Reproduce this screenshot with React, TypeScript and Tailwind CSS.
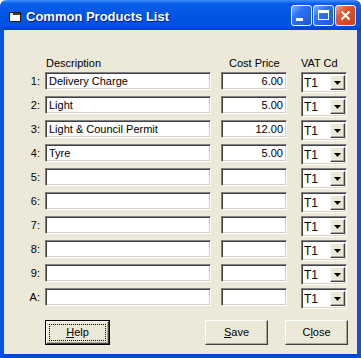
const rows = [
  { n: "1:", desc: "Delivery Charge", price: "6.00" },
  { n: "2:", desc: "Light", price: "5.00" },
  { n: "3:", desc: "Light & Council Permit", price: "12.00" },
  { n: "4:", desc: "Tyre", price: "5.00" },
  { n: "5:", desc: "", price: "" },
  { n: "6:", desc: "", price: "" },
  { n: "7:", desc: "", price: "" },
  { n: "8:", desc: "", price: "" },
  { n: "9:", desc: "", price: "" },
  { n: "A:", desc: "", price: "" },
];

const sunken =
  "border border-t-[#808080] border-l-[#808080] border-b-white border-r-white shadow-[inset_1px_1px_0_#404040,inset_-1px_-1px_0_#d4d0c8] bg-white";

const raised =
  "border border-t-white border-l-white border-b-[#404040] border-r-[#404040] shadow-[inset_-1px_-1px_0_#aca899] bg-[#ece9d8]";

function TitleButton({ kind }: { kind: "min" | "max" | "close" }) {
  const bg =
    kind === "close"
      ? "bg-[linear-gradient(135deg,#f0a08a_0%,#e0582f_35%,#c9401c_100%)]"
      : "bg-[linear-gradient(135deg,#7fb0ff_0%,#2f74f5_35%,#1a55e0_100%)]";
  return (
    <div
      className={`w-[21px] h-[21px] rounded-[3px] border border-white flex items-center justify-center ${bg}`}
    >
      {kind === "min" && <div className="w-[7px] h-[3px] bg-white mt-[9px] -ml-[5px]" />}
      {kind === "max" && (
        <div className="w-[11px] h-[10px] border border-white border-t-[3px]" />
      )}
      {kind === "close" && (
        <svg width="11" height="11" viewBox="0 0 11 11">
          <path d="M1.5 1.5 L9.5 9.5 M9.5 1.5 L1.5 9.5" stroke="white" strokeWidth="2" />
        </svg>
      )}
    </div>
  );
}

function Combo() {
  return (
    <div className={`${sunken} w-[46px] h-[21px] flex items-center pl-[2px] pr-[1px]`}>
      <span className="flex-1 leading-none text-[12px]">T1</span>
      <div className={`${raised} w-[15px] h-[15px] flex items-center justify-center`}>
        <svg width="7" height="4" viewBox="0 0 7 4">
          <path d="M0 0 H7 L3.5 4 Z" fill="black" />
        </svg>
      </div>
    </div>
  );
}

export default function App() {
  return (
    <div
      className="w-[361px] h-[358px] flex flex-col text-[11px] text-black select-none"
      style={{ fontFamily: '"Liberation Sans", Arial, sans-serif' }}
    >
      {/* title bar */}
      <div className="h-[30px] shrink-0 rounded-t-[6px] bg-[linear-gradient(to_bottom,#3c8ff9_0%,#0a5fe9_12%,#0055e5_50%,#0052e0_85%,#0040d0_100%)] flex items-center pl-[9px] pr-[5px]">
        <svg width="12" height="10" viewBox="0 0 12 10" className="mt-[3px]">
          <rect x="0.5" y="0.5" width="11" height="9" fill="white" stroke="#1a1a1a" />
          <rect x="1" y="1" width="10" height="2" fill="#3a3a3a" />
          <rect x="1" y="1" width="3" height="2" fill="#dcdcdc" />
        </svg>
        <span className="ml-[5px] mt-[3px] text-white font-bold text-[13px] [text-shadow:1px_1px_#0a1883]">
          Common Products List
        </span>
        <div className="ml-auto flex gap-[1px]">
          <TitleButton kind="min" />
          <TitleButton kind="max" />
          <TitleButton kind="close" />
        </div>
      </div>

      {/* body */}
      <div className="flex-1 bg-[#ece9d8] border-x-4 border-b-4 border-x-[#0055e5] border-b-[#0049d8] pt-[25px]">
        <div className="flex h-[14px] items-end leading-none">
          <div className="w-[41px]" />
          <div className="w-[166px] pl-[1px]">Description</div>
          <div className="w-[66px] ml-[10px] pl-[8px]">Cost Price</div>
          <div className="ml-[14px]">VAT Cd</div>
        </div>

        <div className="mt-[3px] flex flex-col">
          {rows.map((r) => (
            <div key={r.n} className="flex h-[24px] items-start">
              <div className="w-[41px] h-[18px] flex items-center justify-end pr-[5px]">
                {r.n}
              </div>
              <div className={`${sunken} w-[166px] h-[18px] flex items-center px-[3px]`}>
                {r.desc}
              </div>
              <div
                className={`${sunken} w-[66px] h-[18px] ml-[10px] flex items-center justify-end px-[3px]`}
              >
                {r.price}
              </div>
              <div className="ml-[14px]">
                <Combo />
              </div>
            </div>
          ))}
        </div>

        <div className="mt-[8px] flex">
          <div className="ml-[41px] w-[65px] h-[25px] border border-black">
            <div className={`${raised} w-full h-full flex items-center justify-center p-[2px]`}>
              <div className="w-full h-full border border-dotted border-black flex items-center justify-center">
                <span>
                  <span className="underline">H</span>elp
                </span>
              </div>
            </div>
          </div>
          <div
            className={`${raised} ml-[95px] w-[63px] h-[25px] flex items-center justify-center`}
          >
            <span>
              <span className="underline">S</span>ave
            </span>
          </div>
          <div
            className={`${raised} ml-[17px] w-[63px] h-[25px] flex items-center justify-center`}
          >
            <span>
              C<span className="underline">l</span>ose
            </span>
          </div>
        </div>
      </div>
    </div>
  );
}
